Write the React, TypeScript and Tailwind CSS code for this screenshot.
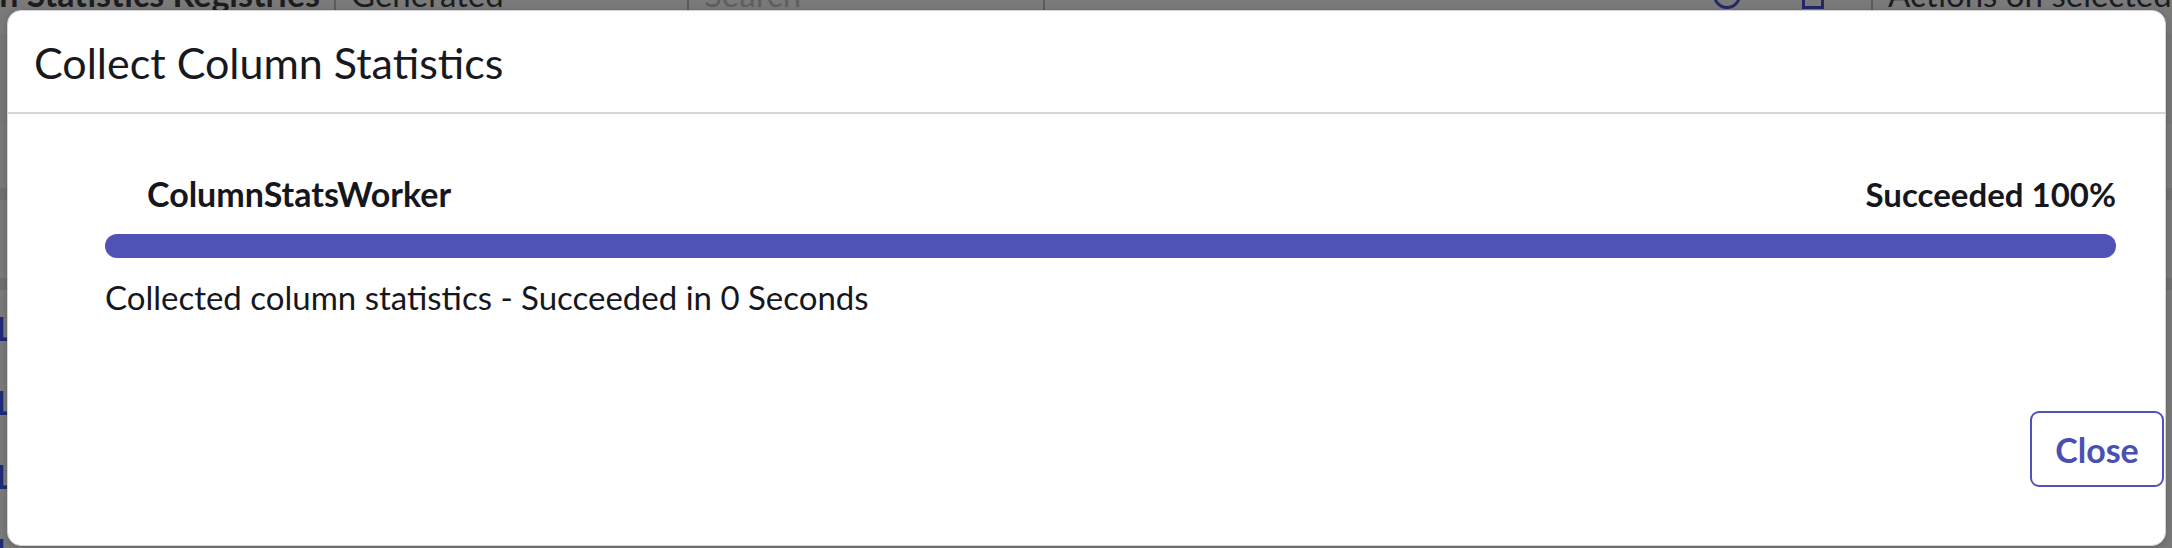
import React from "react";

const rows = [0, 1, 2, 3];

const App = () => {
  return (
    <div className="relative h-[548px] w-[2172px] overflow-hidden bg-[#7a7a7a] font-['Lato','Noto_Sans',sans-serif]">
      {/* page behind the overlay */}
      <div className="-mt-[26px] flex h-[40px] items-center text-[33px] leading-[40px] text-[#1d1d1f]">
        <span className="flex w-[320px] justify-end overflow-hidden whitespace-nowrap text-[34px] font-bold">
          Column Statistics Registries
        </span>
        <span className="ml-[14px] h-[40px] w-[2px] bg-[#5c5c5c]" />
        <span className="ml-[15px] w-[302px]">Generated</span>
        <span className="w-[16px] text-[16px]">▾</span>
        <span className="ml-[18px] h-[40px] w-[2px] bg-[#5c5c5c]" />
        <span className="ml-[15px] w-[339px] text-[#5f5f5f]">Search</span>
        <span className="h-[40px] w-[2px] bg-[#5c5c5c]" />
        <span className="ml-[668px] h-[30px] w-[28px] rounded-full border-[3px] border-[#24286b]" />
        <span className="ml-[61px] h-[30px] w-[22px] border-[3px] border-[#24286b]" />
        <span className="ml-[47px] h-[40px] w-[2px] bg-[#5c5c5c]" />
        <span className="ml-[15px] whitespace-nowrap">Actions on selected</span>
      </div>
      <div className="mt-[20px] h-[90px] bg-[#767676]" />
      <div className="mt-[64px] h-[12px] bg-[#707070]" />
      <div className="mt-[78px] h-[12px] bg-[#707070]" />
      <div className="mt-[18px] flex flex-col gap-[34px]">
        {rows.map((r) => (
          <span
            key={r}
            className="-ml-[4px] text-[33px] font-bold leading-[40px] text-[#1f2a78]"
          >
            L
          </span>
        ))}
      </div>

      {/* dialog */}
      <div className="absolute left-[7px] top-[10px] flex h-[536px] w-[2159px] flex-col rounded-[14px] border border-[#d4d4d8] bg-white shadow-[0_2px_8px_rgba(0,0,0,0.18)]">
        <div className="h-[103px] border-b-2 border-[#d6d6db] pl-[26px] pt-[27px]">
          <h2 className="text-[43px] leading-[50px] text-[#18191f]">
            Collect Column Statistics
          </h2>
        </div>

        <div className="flex-1 pl-[97px] pr-[49px] pt-[60px]">
          <div className="flex items-center justify-between text-[34px] font-bold leading-[40px] text-[#16171d]">
            <span className="pl-[42px]">ColumnStatsWorker</span>
            <span className="text-[33px]">Succeeded 100%</span>
          </div>
          <div className="mt-[20px] h-[24px] w-full rounded-full bg-[#5053b5]" />
          <p className="mt-[19px] text-[33px] leading-[40px] text-[#16171d]">
            Collected column statistics - Succeeded in 0 Seconds
          </p>
        </div>

        <div className="flex justify-end pb-[58px] pr-[1px]">
          <button className="h-[76px] w-[134px] rounded-[9px] border-2 border-[#5053b5] text-[34px] font-bold text-[#4a4fb4]">
            Close
          </button>
        </div>
      </div>
    </div>
  );
};

export default App;
